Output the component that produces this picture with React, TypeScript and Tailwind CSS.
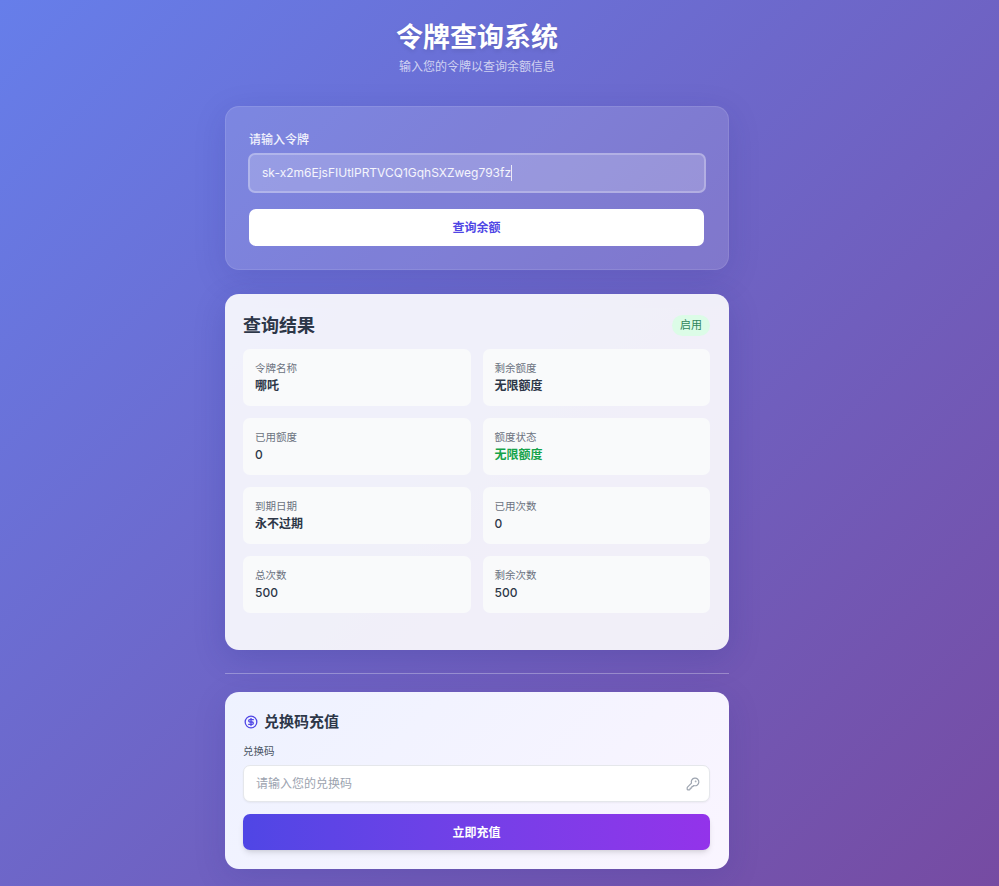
import { CircleDollarSign, KeyRound } from 'lucide-react';

const fields = [
  { label: '令牌名称', value: '哪吒', strong: true },
  { label: '剩余额度', value: '无限额度', strong: true },
  { label: '已用额度', value: '0' },
  { label: '额度状态', value: '无限额度', strong: true, green: true },
  { label: '到期日期', value: '永不过期', strong: true },
  { label: '已用次数', value: '0' },
  { label: '总次数', value: '500' },
  { label: '剩余次数', value: '500' },
];

export default function App() {
  return (
    <div className="h-[886px] overflow-hidden bg-[linear-gradient(135deg,#667eea_0%,#764ba2_100%)] pr-[45px] font-['Inter','Noto_Sans_CJK_SC',sans-serif] text-[#2d3748]">
      <div className="mx-auto w-[504px] pt-[19px]">
        <div className="text-center">
          <h1 className="text-[27px] leading-[38px] font-bold text-white [text-shadow:0_2px_4px_rgba(0,0,0,0.1)]">令牌查询系统</h1>
          <p className="text-[12px] leading-[20px] text-white/70">输入您的令牌以查询余额信息</p>
        </div>

        <div className="mt-[29px] h-[164px] rounded-[14px] border border-white/10 bg-white/[0.13] px-[23px] pt-[23px] shadow-[0_8px_32px_rgba(31,38,135,0.15)]">
          <label className="block text-[12px] leading-[20px] font-medium text-white/90">请输入令牌</label>
          <div className="mt-[3px] -mx-[1px] flex h-[40px] items-center rounded-[7px] border-2 border-white/25 bg-white/20 px-[12px] text-[12px] text-white/90">
            <span className="border-r border-white/80 leading-[16px]">sk-x2m6EjsFIUtlPRTVCQ1GqhSXZweg793fz</span>
          </div>
          <button type="button" className="mt-[16px] block h-[37px] w-[455px] rounded-[7px] bg-white pt-px text-[12px] font-bold text-[#4f46e5]">查询余额</button>
        </div>

        <div className="mt-[24px] h-[356px] rounded-[14px] bg-white/90 pr-[19px] pl-[18px] pt-[21px] shadow-[0_8px_32px_rgba(31,38,135,0.2)]">
          <div className="flex items-start justify-between">
            <h2 className="text-[18px] leading-[21px] font-bold text-[#2d3748]">查询结果</h2>
            <span className="rounded-full bg-[#dcfce7] px-[8px] py-[2px] text-[11px] leading-[17px] text-[#2f855a]">启用</span>
          </div>
          <div className="mt-[13px] grid grid-cols-2 gap-[12px]">
            {fields.map(f => (
              <div key={f.label} className="h-[57px] rounded-[7px] bg-[#f9fafb] pl-[12px] pt-[12px]">
                <div className="text-[10.5px] leading-[16px] text-[#6b7280]">{f.label}</div>
                <div className={`text-[12px] leading-[17px] ${f.strong ? 'font-bold' : 'font-medium'} ${f.green ? 'text-[#16a34a]' : 'text-[#2d3748]'}`}>{f.value}</div>
              </div>
            ))}
          </div>
        </div>

        <div className="mt-[23px] h-px bg-white/30" />

        <div className="mt-[18px] h-[177px] rounded-[14px] bg-[linear-gradient(135deg,#eef2ff,#faf5ff)] pr-[19px] pl-[18px] pt-[19px] shadow-[0_8px_32px_rgba(31,38,135,0.15)]">
          <div className="flex items-center gap-[6px] pl-[1px]">
            <CircleDollarSign className="-mt-px h-[14px] w-[14px] text-[#4f46e5]" strokeWidth={2.2} />
            <h3 className="text-[15px] leading-[22px] font-bold text-[#2d3748]">兑换码充值</h3>
          </div>
          <label className="mt-[11px] block text-[10.5px] leading-[16px] text-[#4b5563]">兑换码</label>
          <div className="relative mt-[5px]">
            <input
              type="text"
              placeholder="请输入您的兑换码"
              className="h-[37px] w-full rounded-[7px] border border-[#e5e7eb] bg-white px-[12px] text-[12px] shadow-[0_1px_2px_rgba(0,0,0,0.05)] outline-none placeholder:text-[#9ca3af]"
            />
            <KeyRound className="absolute top-[12px] right-[10px] h-[14px] w-[14px] text-[#9ca3af]" />
          </div>
          <button type="button" className="mt-[12px] h-[36px] w-full rounded-[7px] bg-gradient-to-r from-[#4f46e5] to-[#9333ea] pt-px text-[12px] font-bold text-white shadow-md">立即充值</button>
        </div>
      </div>
    </div>
  );
}
